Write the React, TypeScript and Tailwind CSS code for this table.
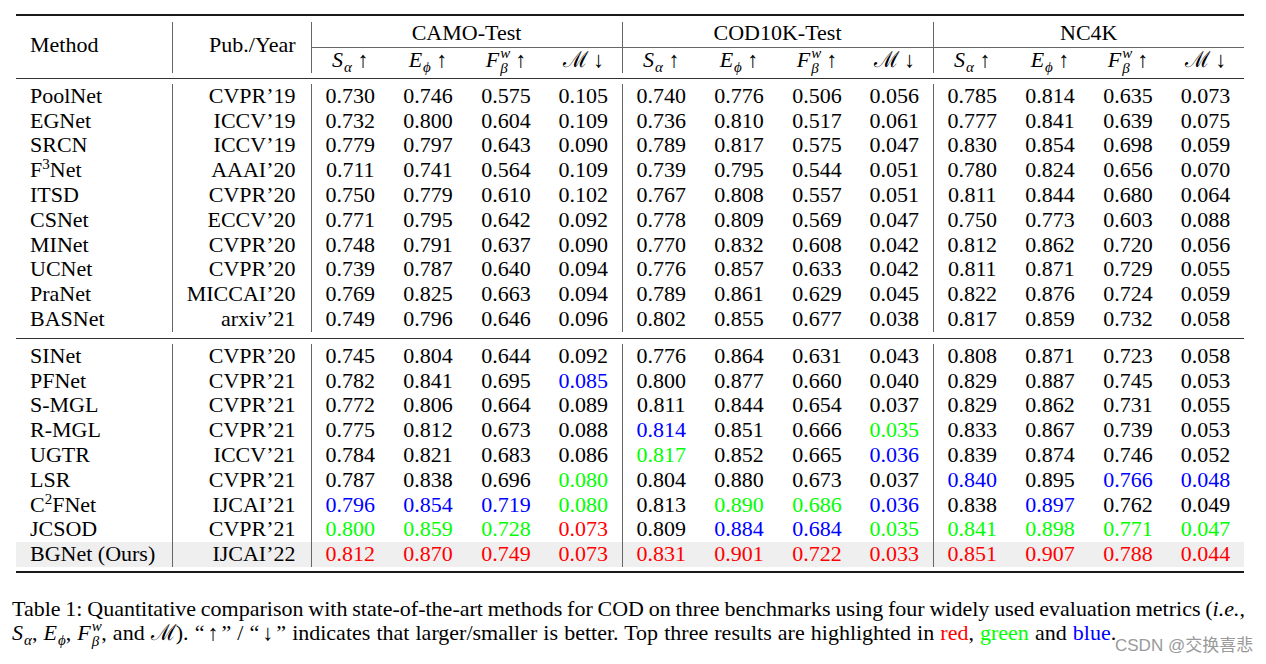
import type { ReactNode } from 'react';

type Mark = 'r' | 'g' | 'b';

const markColor: Record<Mark, string> = {
  r: 'text-[#ff0000]',
  g: 'text-[#00ff00]',
  b: 'text-[#0000ff]',
};

interface Row {
  name: ReactNode;
  pub: string;
  vals: string; // space separated, ":r" / ":g" / ":b" marks a highlight
  shaded?: boolean;
}

const sup = 'relative -top-[8px] text-[15px] leading-none';

const groupA: Row[] = [
  { name: 'PoolNet', pub: 'CVPR’19', vals: '0.730 0.746 0.575 0.105 0.740 0.776 0.506 0.056 0.785 0.814 0.635 0.073' },
  { name: 'EGNet', pub: 'ICCV’19', vals: '0.732 0.800 0.604 0.109 0.736 0.810 0.517 0.061 0.777 0.841 0.639 0.075' },
  { name: 'SRCN', pub: 'ICCV’19', vals: '0.779 0.797 0.643 0.090 0.789 0.817 0.575 0.047 0.830 0.854 0.698 0.059' },
  {
    name: (
      <>
        F<span className={sup}>3</span>Net
      </>
    ),
    pub: 'AAAI’20',
    vals: '0.711 0.741 0.564 0.109 0.739 0.795 0.544 0.051 0.780 0.824 0.656 0.070',
  },
  { name: 'ITSD', pub: 'CVPR’20', vals: '0.750 0.779 0.610 0.102 0.767 0.808 0.557 0.051 0.811 0.844 0.680 0.064' },
  { name: 'CSNet', pub: 'ECCV’20', vals: '0.771 0.795 0.642 0.092 0.778 0.809 0.569 0.047 0.750 0.773 0.603 0.088' },
  { name: 'MINet', pub: 'CVPR’20', vals: '0.748 0.791 0.637 0.090 0.770 0.832 0.608 0.042 0.812 0.862 0.720 0.056' },
  { name: 'UCNet', pub: 'CVPR’20', vals: '0.739 0.787 0.640 0.094 0.776 0.857 0.633 0.042 0.811 0.871 0.729 0.055' },
  { name: 'PraNet', pub: 'MICCAI’20', vals: '0.769 0.825 0.663 0.094 0.789 0.861 0.629 0.045 0.822 0.876 0.724 0.059' },
  { name: 'BASNet', pub: 'arxiv’21', vals: '0.749 0.796 0.646 0.096 0.802 0.855 0.677 0.038 0.817 0.859 0.732 0.058' },
];

const groupB: Row[] = [
  { name: 'SINet', pub: 'CVPR’20', vals: '0.745 0.804 0.644 0.092 0.776 0.864 0.631 0.043 0.808 0.871 0.723 0.058' },
  { name: 'PFNet', pub: 'CVPR’21', vals: '0.782 0.841 0.695 0.085:b 0.800 0.877 0.660 0.040 0.829 0.887 0.745 0.053' },
  { name: 'S-MGL', pub: 'CVPR’21', vals: '0.772 0.806 0.664 0.089 0.811 0.844 0.654 0.037 0.829 0.862 0.731 0.055' },
  { name: 'R-MGL', pub: 'CVPR’21', vals: '0.775 0.812 0.673 0.088 0.814:b 0.851 0.666 0.035:g 0.833 0.867 0.739 0.053' },
  { name: 'UGTR', pub: 'ICCV’21', vals: '0.784 0.821 0.683 0.086 0.817:g 0.852 0.665 0.036:b 0.839 0.874 0.746 0.052' },
  { name: 'LSR', pub: 'CVPR’21', vals: '0.787 0.838 0.696 0.080:g 0.804 0.880 0.673 0.037 0.840:b 0.895 0.766:b 0.048:b' },
  {
    name: (
      <>
        C<span className={sup}>2</span>FNet
      </>
    ),
    pub: 'IJCAI’21',
    vals: '0.796:b 0.854:b 0.719:b 0.080:g 0.813 0.890:g 0.686:g 0.036:b 0.838 0.897:b 0.762 0.049',
  },
  { name: 'JCSOD', pub: 'CVPR’21', vals: '0.800:g 0.859:g 0.728:g 0.073:r 0.809 0.884:b 0.684:b 0.035:g 0.841:g 0.898:g 0.771:g 0.047:g' },
  {
    name: 'BGNet (Ours)',
    pub: 'IJCAI’22',
    vals: '0.812:r 0.870:r 0.749:r 0.073:r 0.831:r 0.901:r 0.722:r 0.033:r 0.851:r 0.907:r 0.788:r 0.044:r',
    shaded: true,
  },
];

const LINE = 'border-[#666]';

// subscript / stacked sub+sup, positioned so they don't grow the line box
function Sub({ children }: { children: ReactNode }) {
  return <span className="relative top-[5px] ml-[1px] text-[15px] leading-none italic">{children}</span>;
}

function FBeta() {
  return (
    <>
      <i>F</i>
      <span className="relative -top-[9px] ml-[1px] text-[15px] leading-none italic">w</span>
      <span className="relative top-[6px] -ml-[10px] mr-[2px] text-[15px] leading-none italic">β</span>
    </>
  );
}

function Metric({ kind }: { kind: 'S' | 'E' | 'F' | 'M' }) {
  if (kind === 'M') {
    return <span className="whitespace-nowrap">ℳ ↓</span>;
  }
  if (kind === 'F') {
    return (
      <span className="whitespace-nowrap">
        <FBeta /> ↑
      </span>
    );
  }
  return (
    <span className="whitespace-nowrap">
      <i>{kind}</i>
      <Sub>{kind === 'S' ? 'α' : 'ϕ'}</Sub> ↑
    </span>
  );
}

function Spacer({ h }: { h: string }) {
  return (
    <tr>
      <td colSpan={14} className={`p-0 ${h}`} />
    </tr>
  );
}

function Rule({ thick }: { thick?: boolean }) {
  return (
    <tr>
      <td colSpan={14} className="p-0">
        <div className={thick ? 'h-[2px] bg-[#1a1a1a]' : 'h-[1px] bg-[#333]'} />
      </td>
    </tr>
  );
}

function DataRow({ row }: { row: Row }) {
  const cells = row.vals.split(' ').map((v) => {
    const [num, m] = v.split(':');
    return { num, cls: m ? markColor[m as Mark] : '' };
  });
  return (
    <tr className={`h-[24.8px] ${row.shaded ? 'bg-[#efefef]' : ''}`}>
      <td className="p-0 pl-[14px] text-left whitespace-nowrap">{row.name}</td>
      <td className={`p-0 pr-[15px] text-right border-l ${LINE}`}>{row.pub}</td>
      {cells.map((c, i) => (
        <td key={i} className={`p-0 text-center ${c.cls} ${i % 4 === 0 ? `border-l ${LINE}` : ''}`}>
          {c.num}
        </td>
      ))}
    </tr>
  );
}

export default function App() {
  const groups = ['CAMO-Test', 'COD10K-Test', 'NC4K'];
  const kinds: ('S' | 'E' | 'F' | 'M')[] = ['S', 'E', 'F', 'M'];

  return (
    <div className="relative w-[1266px] h-[664px] bg-white overflow-hidden text-black font-['Liberation_Serif','DejaVu_Serif',serif]">
      <table className="ml-[16px] mt-[14px] w-[1228px] table-fixed border-collapse text-[22px] leading-[24.8px]">
        <colgroup>
          <col className="w-[156px]" />
          <col className="w-[139px]" />
          {groups.map((g) => [
            <col key={g + 1} className="w-[78px]" />,
            <col key={g + 2} className="w-[78px]" />,
            <col key={g + 3} className="w-[78px]" />,
            <col key={g + 4} className="w-[77px]" />,
          ])}
        </colgroup>
        <tbody>
          <Rule thick />
          <Spacer h="h-[6px]" />
          <tr className="h-[25px]">
            <th rowSpan={2} className="p-0 pl-[14px] pb-[5px] text-left font-normal">
              Method
            </th>
            <th rowSpan={2} className={`p-0 pr-[15px] pb-[5px] text-right font-normal border-l ${LINE}`}>
              Pub./Year
            </th>
            {groups.map((g) => (
              <th
                key={g}
                colSpan={4}
                className={`p-0 pb-[4px] leading-[21px] text-center font-normal border-l border-b ${LINE}`}
              >
                {g}
              </th>
            ))}
          </tr>
          <tr className="h-[24px]">
            {groups.map((g) =>
              kinds.map((k, i) => (
                <th key={g + k} className={`p-0 text-center font-normal ${i === 0 ? `border-l ${LINE}` : ''}`}>
                  <Metric kind={k} />
                </th>
              )),
            )}
          </tr>
          <Spacer h="h-[5px]" />
          <Rule />
          <Spacer h="h-[5px]" />
          {groupA.map((r) => (
            <DataRow key={r.pub + String(r.vals)} row={r} />
          ))}
          <Spacer h="h-[6px]" />
          <Rule />
          <Spacer h="h-[5px]" />
          {groupB.map((r) => (
            <DataRow key={r.pub + String(r.vals)} row={r} />
          ))}
          <Spacer h="h-[4px]" />
          <Rule thick />
        </tbody>
      </table>

      {/* Caption */}
      <div className="ml-[12px] mt-[24px] w-[1233px] text-[22px] leading-[24px]">
        <p className="text-justify [text-align-last:justify] [word-spacing:-2px]">
          Table 1: Quantitative comparison with state-of-the-art methods for COD on three benchmarks using four
          widely used evaluation metrics (<i>i.e.</i>,
        </p>
        <p className="whitespace-nowrap [word-spacing:0.6px]">
          <i>S</i>
          <Sub>α</Sub>, <i>E</i>
          <Sub>ϕ</Sub>, <FBeta />, and ℳ). “<span className="inline-block px-[3px]">↑</span>” / “<span className="inline-block px-[3px]">↓</span>” indicates that larger/smaller is better. Top three results
          are highlighted in <span className="text-[#ff0000]">red</span>,{' '}
          <span className="text-[#00ff00]">green</span> and <span className="text-[#0000ff]">blue</span>.
        </p>
      </div>

      {/* watermark */}
      <div className="absolute left-[1115px] top-[637px] text-[17px] leading-none text-[#9a9a9a] font-['Liberation_Sans','Noto_Sans_CJK_SC',sans-serif]">
        CSDN @交换喜悲
      </div>
    </div>
  );
}
